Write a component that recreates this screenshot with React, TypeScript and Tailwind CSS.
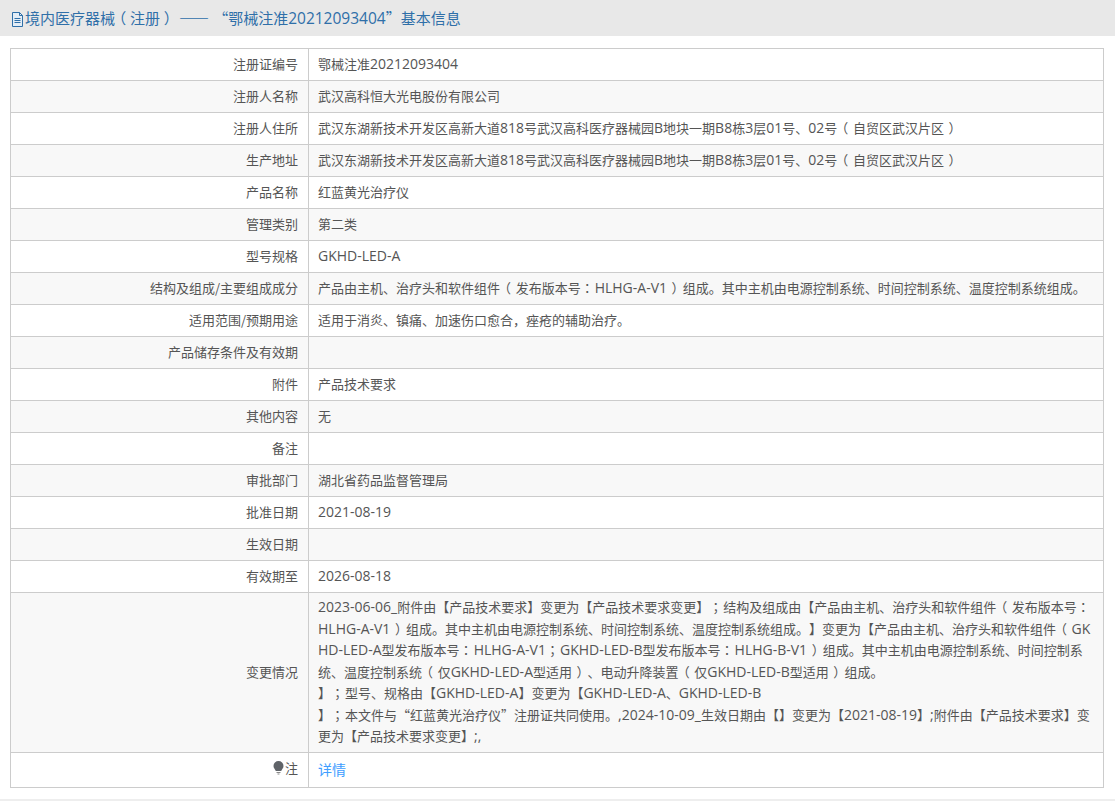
import { Fragment } from "react";

type Row = { label: string; value: string };

const rows: Row[] = [
  { label: "注册证编号", value: "鄂械注准20212093404" },
  { label: "注册人名称", value: "武汉高科恒大光电股份有限公司" },
  { label: "注册人住所", value: "武汉东湖新技术开发区高新大道818号武汉高科医疗器械园B地块一期B8栋3层01号、02号（自贸区武汉片区）" },
  { label: "生产地址", value: "武汉东湖新技术开发区高新大道818号武汉高科医疗器械园B地块一期B8栋3层01号、02号（自贸区武汉片区）" },
  { label: "产品名称", value: "红蓝黄光治疗仪" },
  { label: "管理类别", value: "第二类" },
  { label: "型号规格", value: "GKHD-LED-A" },
  { label: "结构及组成/主要组成成分", value: "产品由主机、治疗头和软件组件（发布版本号：HLHG-A-V1）组成。其中主机由电源控制系统、时间控制系统、温度控制系统组成。" },
  { label: "适用范围/预期用途", value: "适用于消炎、镇痛、加速伤口愈合，痤疮的辅助治疗。" },
  { label: "产品储存条件及有效期", value: "" },
  { label: "附件", value: "产品技术要求" },
  { label: "其他内容", value: "无" },
  { label: "备注", value: "" },
  { label: "审批部门", value: "湖北省药品监督管理局" },
  { label: "批准日期", value: "2021-08-19" },
  { label: "生效日期", value: "" },
  { label: "有效期至", value: "2026-08-18" },
];

const changeLines = [
  "2023-06-06_附件由【产品技术要求】变更为【产品技术要求变更】；结构及组成由【产品由主机、治疗头和软件组件（发布版本号：",
  "HLHG-A-V1）组成。其中主机由电源控制系统、时间控制系统、温度控制系统组成。】变更为【产品由主机、治疗头和软件组件（GK",
  "HD-LED-A型发布版本号：HLHG-A-V1；GKHD-LED-B型发布版本号：HLHG-B-V1）组成。其中主机由电源控制系统、时间控制系",
  "统、温度控制系统（仅GKHD-LED-A型适用）、电动升降装置（仅GKHD-LED-B型适用）组成。",
  "】；型号、规格由【GKHD-LED-A】变更为【GKHD-LED-A、GKHD-LED-B",
  "】；本文件与“红蓝黄光治疗仪”注册证共同使用。,2024-10-09_生效日期由【】变更为【2021-08-19】;附件由【产品技术要求】变",
  "更为【产品技术要求变更】;,",
];

// latin runs sit a pixel larger than the CJK text, punctuation gets centred in its box
function Mixed({
  text,
  latin = "text-[14px]",
  paren = "px-[0.35em]",
}: {
  text: string;
  latin?: string;
  paren?: string;
}) {
  const parts = text.split(/([\x20-\x7e]+|[（）：；“”—])/).filter(Boolean);
  return (
    <>
      {parts.map((p, i) => {
        if (/^[\x20-\x7e]+$/.test(p)) {
          return (
            <span key={i} className={`${latin} font-['Open_Sans','Noto_Sans_CJK_SC',sans-serif]`}>
              {p}
            </span>
          );
        }
        if (p === "（" || p === "）") {
          return (
            <span key={i} className={`inline-block ${paren} [font-feature-settings:'halt']`}>
              {p}
            </span>
          );
        }
        if (p === "：" || p === "；") {
          return (
            <span key={i} className="pr-px font-['Noto_Sans_CJK_TC',sans-serif]">
              {p}
            </span>
          );
        }
        if (p === "“" || p === "”" || p === "—") {
          return (
            <span key={i} className="[font-variant-east-asian:full-width]">
              {p}
            </span>
          );
        }
        return <Fragment key={i}>{p}</Fragment>;
      })}
    </>
  );
}

function FileIcon() {
  return (
    <svg width="13" height="15" viewBox="0 0 13 15" className="mr-px shrink-0" fill="#e3edf6" stroke="#2f6fa8">
      <path d="M1.5.5h7l3 3v11h-10z" />
      <path d="M8.500.5v3h3M3.500 6.500h6M3.500 8.500h6M3.500 10.500h6" fill="none" />
    </svg>
  );
}

function BulbIcon() {
  return (
    <svg width="11" height="14" viewBox="0 0 11 14" className="mr-px">
      <path d="M5.500 0a5 5 0 0 1 5 5c0 2.100-1.500 3.100-2.300 5H2.800C2 8.100.5 7.100.5 5a5 5 0 0 1 5-5z" fill="#5f6368" />
      <path d="M3.500 11h4v1h-4zM4.500 12.500h2v1h-2z" fill="#8a8a8a" />
    </svg>
  );
}

const labelCell =
  "w-[298px] border border-[#cccccc] px-[10px] pt-0 pb-[2px] text-right align-middle font-normal text-[#555555]";
const valueCell = "border border-[#cccccc] px-[9px] pt-0 pb-[2px] text-left align-middle text-[#555555]";

export default function App() {
  return (
    <div className="min-h-[801px] bg-white font-['Noto_Sans_CJK_SC','Noto_Sans',sans-serif] text-[13px] [text-spacing-trim:space-all]">
      <div className="flex h-9 items-center bg-[#e8e8e8] pl-[11px] pt-[2px] text-[15px] text-[#2f6fa8]">
        <FileIcon />
        <span className="whitespace-pre">
          <Mixed
            text="境内医疗器械（注册） —— “鄂械注准20212093404”基本信息"
            latin="text-[15.5px]"
            paren="px-[0.25em]"
          />
        </span>
      </div>
      <div className="px-[10px] pt-3">
        <table className="w-[1094px] table-fixed border-collapse border border-[#cccccc]">
          <tbody>
            {rows.map((r, i) => (
              <tr key={r.label} className={i % 2 === 1 ? "h-8 bg-[#f8f8f8]" : "h-8 bg-white"}>
                <th className={labelCell}>{r.label}</th>
                <td className={valueCell}>
                  <Mixed text={r.value} />
                </td>
              </tr>
            ))}
            <tr className="h-40 bg-[#f8f8f8]">
              <th className={labelCell}>变更情况</th>
              <td className={valueCell}>
                {changeLines.map((line) => (
                  <div key={line} className="whitespace-nowrap leading-[21.6px]">
                    <Mixed text={line} />
                  </div>
                ))}
              </td>
            </tr>
            <tr className="h-[35px] bg-white">
              <th className={labelCell}>
                <span className="inline-flex items-center justify-end">
                  <BulbIcon />注
                </span>
              </th>
              <td className={valueCell}>
                <a href="#" className="text-[14px] text-[#409eff]">
                  详情
                </a>
              </td>
            </tr>
          </tbody>
        </table>
      </div>
      <div className="mt-[11px] h-[3px] bg-[#eeeeee]" />
    </div>
  );
}
